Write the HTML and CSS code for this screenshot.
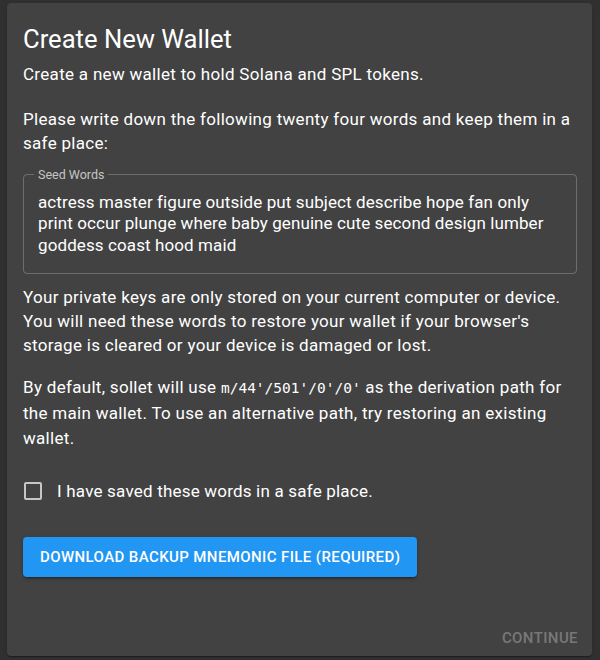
FILE: index.html
```html
<!DOCTYPE html>
<html>
<head>
<meta charset="utf-8">
<link rel="stylesheet" href="styles.css">
</head>
<body>
<div class="card">
  <div class="content">
    <h2 class="title">Create New Wallet</h2>
    <p class="text sub">Create a new wallet to hold Solana and SPL tokens.</p>
    <p class="text p2">Please write down the following twenty four words and keep them in a safe place:</p>
    <fieldset class="field">
      <legend class="legend">Seed Words</legend>
      <div class="seed">actress master figure outside put subject describe hope fan only print occur plunge where baby genuine cute second design lumber goddess coast hood maid</div>
    </fieldset>
    <p class="text p3">Your private keys are only stored on your current computer or device. You will need these words to restore your wallet if your browser's storage is cleared or your device is damaged or lost.</p>
    <p class="text p4">By default, sollet will use <code class="code">m/44'/501'/0'/0'</code> as the derivation path for the main wallet. To use an alternative path, try restoring an existing wallet.</p>
    <label class="check-row">
      <span class="box"></span>
      <span class="text">I have saved these words in a safe place.</span>
    </label>
    <div class="btn-row">
      <button class="btn">Download Backup Mnemonic File (Required)</button>
    </div>
  </div>
  <div class="actions">
    <span class="continue">Continue</span>
  </div>
</div>
</body>
</html>
```
FILE: styles.css
```css
html, body {
  margin: 0;
  padding: 0;
  background: #303030;
}
body {
  font-family: Roboto, "Liberation Sans", sans-serif;
  color: #fff;
  padding: 3px 8px 0 7px;
  height: 660px;
  box-sizing: border-box;
  overflow: hidden;
}
.card {
  background: #424242;
  border-radius: 4px;
  height: 653px;
  display: flex;
  flex-direction: column;
  box-shadow: 0 2px 1px -1px rgba(0,0,0,0.2), 0 1px 1px 0 rgba(0,0,0,0.14), 0 1px 3px 0 rgba(0,0,0,0.12);
}
.content {
  padding: 20px 15px 16px 16px;
  flex: 1;
}
.title {
  margin: 0 0 7px;
  font-size: 25.6px;
  line-height: 32px;
  font-weight: 400;
}
.text {
  margin: 0;
  font-size: 17px;
  line-height: 24.5px;
  letter-spacing: 0.3px;
}
.p2 { margin-top: 20px; }
.field {
  box-sizing: border-box;
  height: 106px;
  margin: 12px 0 0;
  padding: 0 14px;
  border: 1px solid rgba(255,255,255,0.23);
  border-radius: 4px;
}
.legend {
  font-size: 12.5px;
  color: rgba(255,255,255,0.7);
  padding: 0 4px;
  margin-left: -4px;
  line-height: 14px;
}
.seed {
  font-size: 17px;
  letter-spacing: 0.1px;
  line-height: 21.5px;
  margin-top: 10px;
}
.p3 { margin-top: 11px; line-height: 24px; }
.p4 { margin-top: 18.5px; line-height: 25px; }
.code {
  font-family: "DejaVu Sans Mono", monospace;
  font-size: 14.5px;
  letter-spacing: 0;
}
.check-row {
  display: flex;
  align-items: center;
  gap: 15px;
  margin-top: 28px;
  padding-left: 1px;
}
.box {
  width: 14px;
  height: 14px;
  border: 2px solid rgba(255,255,255,0.7);
  border-radius: 2px;
  flex: none;
}
.check-row .text { margin: 0; letter-spacing: 0.2px; }
.btn-row { margin-top: 33px; }
.btn {
  background: #2196f3;
  color: #fff;
  border: none;
  border-radius: 4px;
  font-family: Roboto, "Liberation Sans", sans-serif;
  font-weight: 500;
  font-size: 15px;
  letter-spacing: 0.4px;
  text-transform: uppercase;
  height: 40px;
  padding: 0 17px;
  box-shadow: 0 3px 1px -2px rgba(0,0,0,0.2), 0 2px 2px 0 rgba(0,0,0,0.14), 0 1px 5px 0 rgba(0,0,0,0.12);
}
.actions {
  display: flex;
  justify-content: flex-end;
  padding: 0 14px 9px;
}
.continue {
  font-size: 15px;
  font-weight: 500;
  text-transform: uppercase;
  letter-spacing: 0.4px;
  color: rgba(255,255,255,0.3);
}
```
